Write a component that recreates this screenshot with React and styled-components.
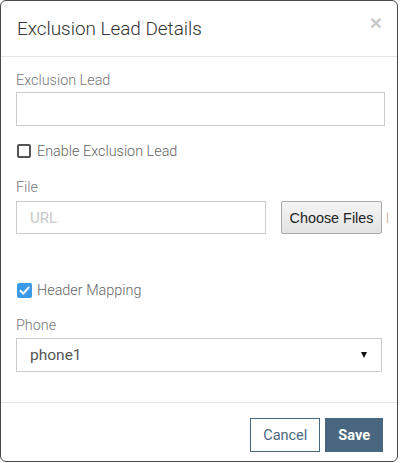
import React from 'react';
import styled, { createGlobalStyle } from 'styled-components';

const GlobalStyle = createGlobalStyle`
  html, body {
    margin: 0;
    padding: 0;
    background: #ffffff;
  }
  body {
    font-family: Roboto, "Liberation Sans", Arial, sans-serif;
    font-size: 14px;
    color: #333;
  }
  * {
    box-sizing: border-box;
  }
`;

const Modal = styled.div`
  width: 398px;
  height: 462px;
  background: #fff;
  border: 1px solid #4a4a4a;
  border-radius: 6px;
  display: flex;
  flex-direction: column;
  overflow: hidden;
`;

const Header = styled.div`
  height: 56px;
  padding: 15px 15px 0 16px;
  border-bottom: 1px solid #e5e5e5;
  display: flex;
  justify-content: space-between;
  align-items: flex-start;
`;

const Title = styled.h4`
  margin: 0;
  font-size: 18.9px;
  font-weight: 300;
  line-height: 25px;
  color: #333;
`;

const Close = styled.button`
  border: none;
  background: none;
  padding: 0;
  margin: -4px 0 0 0;
  color: #c9c9c9;
  font-family: "Liberation Sans", Arial, sans-serif;
  font-size: 21px;
  font-weight: 700;
  line-height: 1;
  cursor: pointer;
`;

const Body = styled.div`
  padding: 14px 15px 15px 15px;
  border-bottom: 1px solid #e5e5e5;
`;

const FormGroup = styled.div`
  margin-bottom: ${(p) => p.$mb ?? 15}px;
`;

const Label = styled.label`
  display: block;
  font-size: 14.4px;
  line-height: 20px;
  color: #777;
  font-weight: 300;
  margin-bottom: ${(p) => p.$mb ?? 1}px;
`;

const TextInput = styled.input`
  display: block;
  flex-shrink: 0;
  width: ${(p) => p.$width || '100%'};
  height: ${(p) => p.$height || 34}px;
  border: 1px solid #ccc;
  border-radius: 0;
  padding: 0 13px;
  font-family: Roboto, sans-serif;
  font-size: 15px;
  color: #555;
  background: #fff;
  outline: none;

  &::placeholder {
    color: #c8c8c8;
  }
`;

const CheckRow = styled.label`
  display: flex;
  align-items: center;
  height: 20px;
  gap: 6px;
  font-size: 14.4px;
  font-weight: 300;
  color: #666;
  cursor: pointer;
`;

const Box = styled.span`
  width: ${(p) => (p.$checked ? 15 : 14)}px;
  height: ${(p) => (p.$checked ? 15 : 14)}px;
  margin-left: 1px;
  margin-right: ${(p) => (p.$checked ? -1 : 0)}px;
  border-radius: 2px;
  border: ${(p) => (p.$checked ? 'none' : '2px solid #555')};
  background: ${(p) => (p.$checked ? '#3c9be8' : '#fff')};
  display: flex;
  align-items: center;
  justify-content: center;
  flex-shrink: 0;
`;

const FileRow = styled.div`
  display: flex;
  align-items: center;
`;

const ChooseButton = styled.button`
  flex-shrink: 0;
  height: 33px;
  width: 101px;
  margin-left: 15px;
  padding: 0;
  border: 1px solid #a9a9a9;
  border-radius: 2px;
  background: linear-gradient(#f4f4f4, #e3e3e3);
  font-family: "Liberation Sans", Arial, sans-serif;
  font-size: 14.4px;
  color: #222;
  cursor: pointer;
`;

const NoFile = styled.span`
  flex-shrink: 0;
  width: 2px;
  margin-left: 4px;
  overflow: hidden;
  white-space: nowrap;
  font-family: "Liberation Sans", Arial, sans-serif;
  font-size: 14px;
  color: #aaa;
`;

const Select = styled.div`
  height: 34px;
  border: 1px solid #ccc;
  padding: 0 13px 0 13px;
  display: flex;
  align-items: center;
  justify-content: space-between;
  font-size: 15.5px;
  color: #555;
`;

const Arrow = styled.span`
  width: 0;
  height: 0;
  margin-right: 1px;
  border-left: 3.5px solid transparent;
  border-right: 3.5px solid transparent;
  border-top: 6px solid #111;
`;

const Footer = styled.div`
  padding: 15px 14px 0 15px;
  display: flex;
  justify-content: flex-end;
  gap: 5px;
`;

const Button = styled.button`
  height: 34px;
  padding: 0 12px;
  border: 1px solid #48667f;
  border-radius: 0;
  background: ${(p) => (p.$primary ? '#48667f' : '#fff')};
  color: ${(p) => (p.$primary ? '#fff' : '#4a6884')};
  font-family: Roboto, sans-serif;
  font-size: 14.5px;
  font-weight: ${(p) => (p.$primary ? 700 : 400)};
  cursor: pointer;
`;

function Check() {
  return (
    <svg width="11" height="11" viewBox="0 0 12 12">
      <path d="M1.8 6.4 L4.7 9.2 L10.4 2.8" fill="none" stroke="#fff" strokeWidth="2.2" strokeLinecap="square" />
    </svg>
  );
}

export default function App() {
  return (
    <>
      <GlobalStyle />
      <Modal>
        <Header>
          <Title>Exclusion Lead Details</Title>
          <Close aria-label="Close">×</Close>
        </Header>
        <Body>
          <FormGroup>
            <Label>Exclusion Lead</Label>
            <TextInput $width="369px" />
          </FormGroup>
          <FormGroup $mb={17}>
            <CheckRow>
              <Box />
              Enable Exclusion Lead
            </CheckRow>
          </FormGroup>
          <FormGroup $mb={46}>
            <Label $mb={3}>File</Label>
            <FileRow>
              <TextInput $width="250px" $height={33} placeholder="URL" />
              <ChooseButton>Choose Files</ChooseButton>
              <NoFile>No file chosen</NoFile>
            </FileRow>
          </FormGroup>
          <FormGroup $mb={16}>
            <CheckRow>
              <Box $checked>
                <Check />
              </Box>
              Header Mapping
            </CheckRow>
          </FormGroup>
          <FormGroup $mb={15}>
            <Label $mb={2}>Phone</Label>
            <Select>
              phone1
              <Arrow />
            </Select>
          </FormGroup>
        </Body>
        <Footer>
          <Button>Cancel</Button>
          <Button $primary>Save</Button>
        </Footer>
      </Modal>
    </>
  );
}
